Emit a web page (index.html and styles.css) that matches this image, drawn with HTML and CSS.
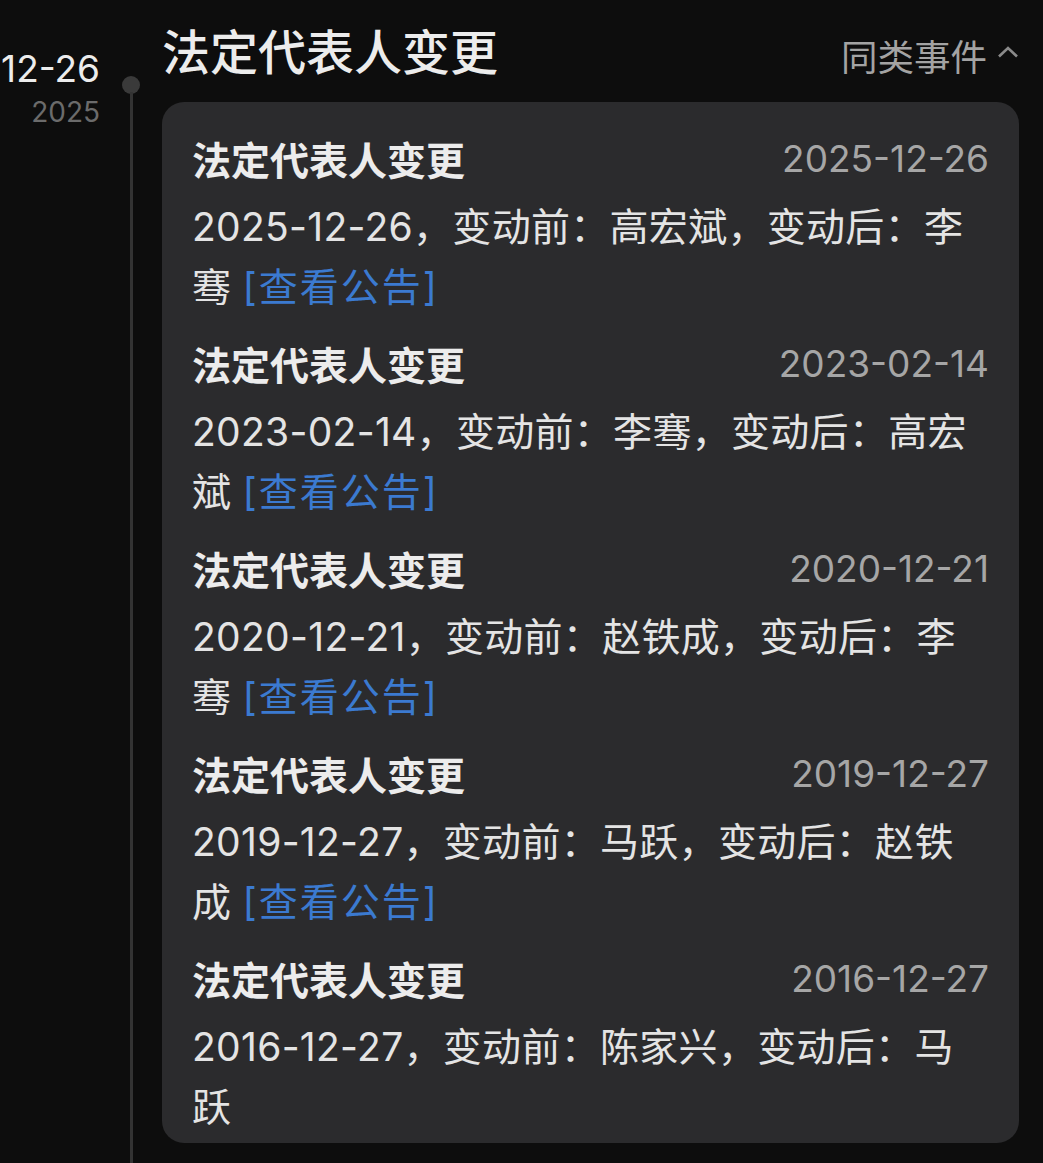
FILE: index.html
```html
<!DOCTYPE html>
<html lang="zh-CN">
<head>
    <meta charset="UTF-8">
    <title>法定代表人变更</title>
    <link rel="stylesheet" href="styles.css">
</head>
<body>
    <div class="timeline">
        <div class="date-col">
            <div class="day">12-26</div>
            <div class="year">2025</div>
        </div>
        <div class="rail">
            <span class="dot"></span>
            <span class="line"></span>
        </div>
        <div class="content">
            <div class="head">
                <h1>法定代表人变更</h1>
                <div class="same">同类事件
                    <svg viewBox="0 0 22 12" class="chev">
                        <polyline points="2,10.5 11,2 20,10.5"/>
                    </svg>
                </div>
            </div>
            <div class="card">
                <div class="item">
                    <div class="item-top"><span class="name">法定代表人变更</span><span class="when">2025-12-26</span></div>
                    <p class="desc">2025-12-26，变动前：高宏斌，变动后：李骞 <a class="link">[查看公告]</a></p>
                </div>
                <div class="item">
                    <div class="item-top"><span class="name">法定代表人变更</span><span class="when">2023-02-14</span></div>
                    <p class="desc">2023-02-14，变动前：李骞，变动后：高宏斌 <a class="link">[查看公告]</a></p>
                </div>
                <div class="item">
                    <div class="item-top"><span class="name">法定代表人变更</span><span class="when">2020-12-21</span></div>
                    <p class="desc">2020-12-21，变动前：赵铁成，变动后：李骞 <a class="link">[查看公告]</a></p>
                </div>
                <div class="item">
                    <div class="item-top"><span class="name">法定代表人变更</span><span class="when">2019-12-27</span></div>
                    <p class="desc">2019-12-27，变动前：马跃，变动后：赵铁成 <a class="link">[查看公告]</a></p>
                </div>
                <div class="item">
                    <div class="item-top"><span class="name">法定代表人变更</span><span class="when">2016-12-27</span></div>
                    <p class="desc">2016-12-27，变动前：陈家兴，变动后：马跃</p>
                </div>
            </div>
        </div>
    </div>
</body>
</html>
```

FILE: styles.css
```css
html,body{
    margin: 0;
    background: #0d0d0d;
}

body{
    font-family: Inter, "Noto Sans CJK SC", sans-serif;
    color: #e6e6e6;
    overflow: hidden;
}

.timeline{
    display: flex;
    min-height: 1163px;
}

/* 左侧日期 */
.date-col{
    width: 100px;
    text-align: right;
    padding-top: 46px;
}

.day{
    font-size: 37px;
    line-height: 46px;
    color: #ececec;
}

.year{
    font-size: 28px;
    line-height: 40px;
    color: #6b6b6b;
}

/* 时间轴 */
.rail{
    width: 62px;
    display: flex;
    flex-direction: column;
    align-items: center;
}

.dot{
    width: 18px;
    height: 18px;
    margin-top: 76px;
    border-radius: 50%;
    background: #3a3a3a;
}

.line{
    flex: 1;
    width: 3px;
    margin-top: -2px;
    background: #333;
}

.content{
    width: 857px;
    padding-bottom: 20px;
}

.head{
    height: 102px;
    display: flex;
    align-items: center;
    justify-content: space-between;
    padding-top: 4px;
    box-sizing: border-box;
}

.head h1{
    margin: 0;
    font-size: 48px;
    font-weight: 500;
    line-height: 60px;
    color: #ececec;
}

.same{
    display: flex;
    align-items: center;
    gap: 10px;
    font-size: 36.5px;
    color: #a3a3a3;
    margin-top: 4px;
}

.chev{
    width: 22px;
    height: 12px;
    margin-top: -6px;
}

.chev polyline{
    fill: none;
    stroke: #8a8a8a;
    stroke-width: 2.6;
}

/* 卡片 */
.card{
    background: #2b2b2d;
    border-radius: 22px;
    padding: 26px 30px 6px;
}

.item + .item{
    margin-top: 16px;
}

.item-top{
    display: flex;
    justify-content: space-between;
    align-items: center;
    height: 60px;
}

.name{
    font-size: 39px;
    font-weight: 700;
    color: #ececec;
}

.when{
    font-size: 37px;
    color: #a6a6a6;
}

.desc{
    margin: 9px 0 0;
    padding-right: 20px;
    font-size: 39px;
    line-height: 60px;
    color: #e4e4e4;
    letter-spacing: 0.3px;
}

.link{
    letter-spacing: 2px;
    color: #3b7ad0;
}
```
